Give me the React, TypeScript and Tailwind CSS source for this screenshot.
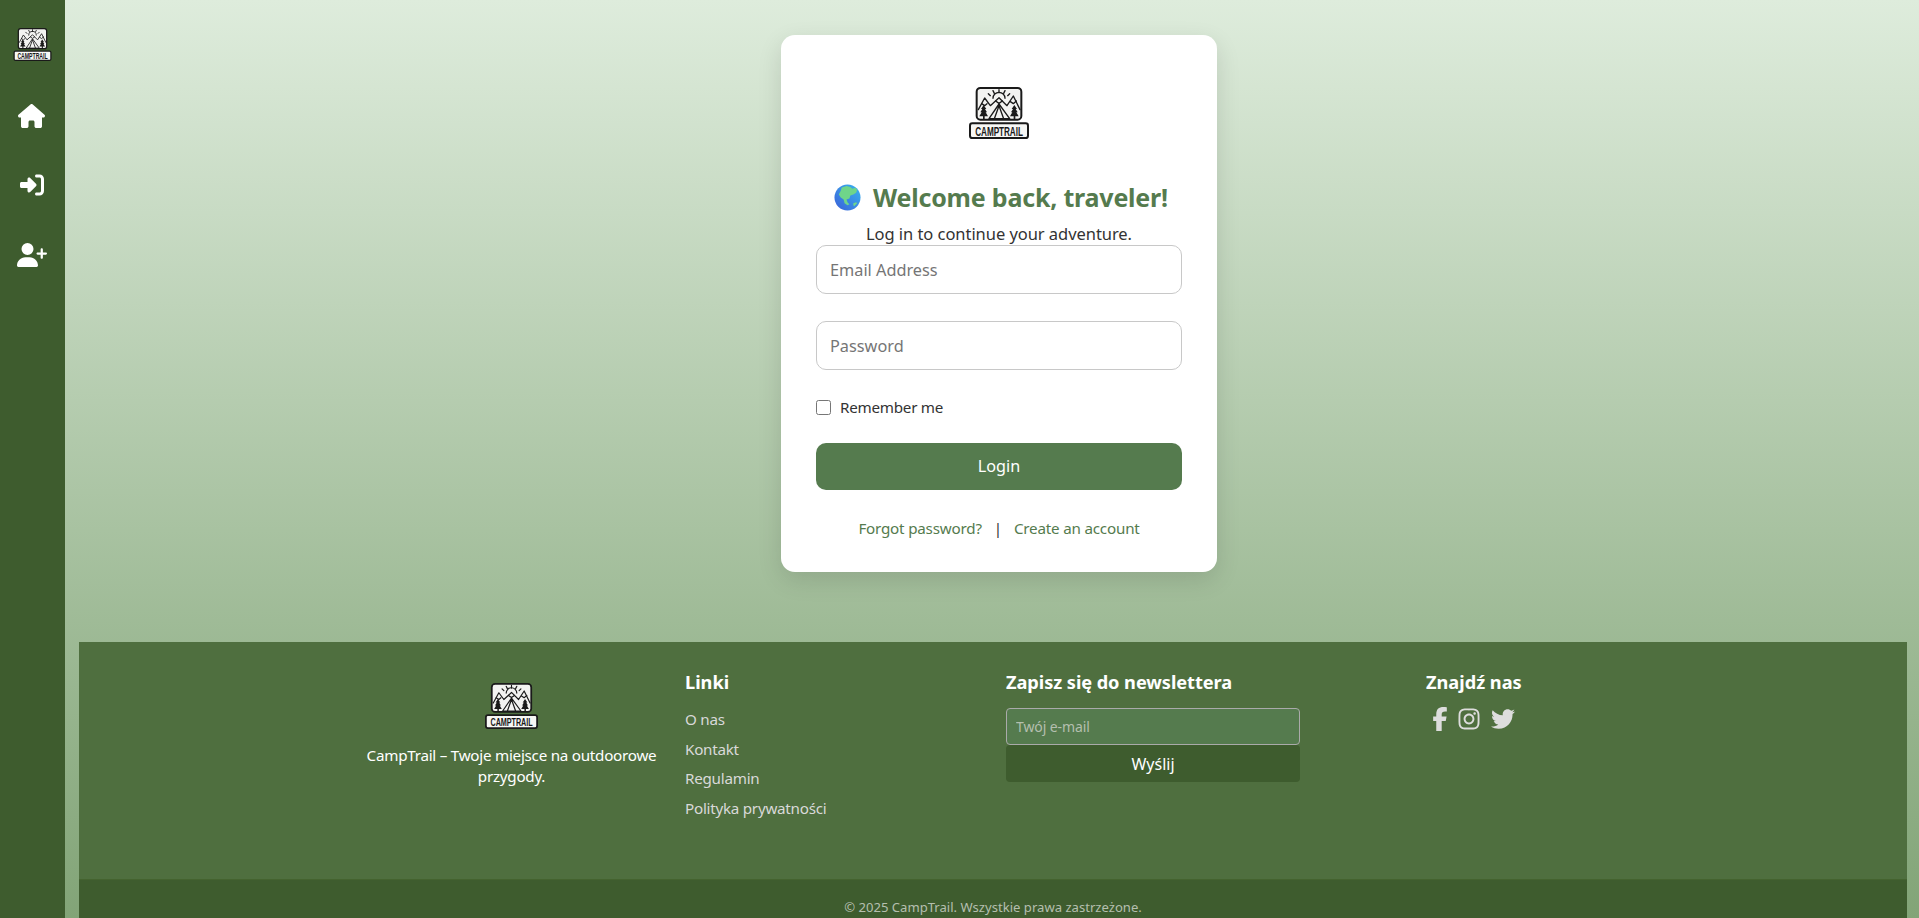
import React from "react";
import { FaHouse, FaRightToBracket, FaUserPlus, FaFacebookF, FaInstagram, FaTwitter } from "react-icons/fa6";

function Logo({ className }: { className: string }) {
  return (
    <svg viewBox="0 0 180 156" className={className}>
      <rect x="23" y="3" width="134" height="95" rx="11" fill="#f3f3f1" stroke="#1a1a1a" strokeWidth="6" />
      <g stroke="#1a1a1a" strokeWidth="4" fill="none" strokeLinecap="round" strokeLinejoin="round">
        <path d="M72 34a18 18 0 0 1 36 0" />
        <path d="M90 8v9M72 11l4 8M108 11l-4 8M58 20l6 6M122 20l-6 6" />
        <path d="M28 68L47 33l17 23 26-24 24 24 19-29 20 41" />
        <path d="M38 50l9 6 7-6M80 42l10 7 10-7M124 44l9 6 9-8" />
        <path d="M60 95l30-44 32 44M90 56L76 95M90 56l14 39M62 95h58" />
      </g>
      <g fill="#1a1a1a">
        <path d="M44 54l8 12h-4l6 10h-4l7 12H47v8h-5v-8H31l7-12h-4l6-10h-4z" />
        <path d="M136 54l8 12h-4l6 10h-4l7 12h-10v8h-5v-8h-11l7-12h-4l6-10h-4z" />
      </g>
      <rect x="3" y="109" width="174" height="44" rx="7" fill="#f7f7f5" stroke="#1a1a1a" strokeWidth="6" />
      <text x="143" y="146" transform="scale(0.63 1)" textAnchor="middle" fontSize="39" fontWeight="700" fill="#1a1a1a" style={{ fontFamily: '"Liberation Sans", sans-serif' }}>CAMPTRAIL</text>
    </svg>
  );
}

function Globe() {
  return (
    <svg viewBox="0 0 28 28" className="w-[27px] h-[27px] shrink-0">
      <defs>
        <linearGradient id="sea" x1="0" y1="1" x2="1" y2="0">
          <stop offset="0" stopColor="#3b5fd8" />
          <stop offset="1" stopColor="#38b6f0" />
        </linearGradient>
      </defs>
      <circle cx="14" cy="14" r="13.500" fill="url(#sea)" />
      <path d="M8 3.500l5-1.500 4 1 2 2 3-1 2 2-1 3-3 2-3 1-1 3-3 1 1 3 2 2-2 1-3-2-1-4-3-2-2-3 2-4z" fill="#6fd58a" />
      <path d="M20 20l3-1 1 1-3 3-1-1z" fill="#6fd58a" />
    </svg>
  );
}

const links = ["O nas", "Kontakt", "Regulamin", "Polityka prywatności"];

export default function App() {
  return (
    <div className="flex h-[918px] overflow-hidden text-[15.200px] tracking-[-0.25px] text-[#333]" style={{ fontFamily: '"Noto Sans", "Open Sans", sans-serif' }}>
      <aside className="w-[65px] shrink-0 bg-[#3e5c2e] flex flex-col items-center text-white pt-[28px]">
        <Logo className="w-[39px] h-[33px]" />
        <FaHouse className="h-[24px] w-[27px] mt-[43px] mr-[2px]" />
        <FaRightToBracket className="h-[24px] w-[24px] mt-[45px] mr-[2px]" />
        <FaUserPlus className="h-[24px] w-[30px] mt-[46px] mr-[2px]" />
      </aside>
      <main className="flex-1 flex flex-col bg-gradient-to-b from-[#deecdc] to-[#82a477] pl-[14px] pr-[12px]">
        <div className="h-[642px] shrink-0 flex justify-center items-start pt-[35px] pl-[12px]">
          <div className="w-[436px] h-[537px] bg-white rounded-[14px] shadow-[0_8px_24px_rgba(0,0,0,0.12)] px-[35px] pt-[52px] flex flex-col">
            <Logo className="w-[60px] h-[52px] mx-auto" />
            <h1 className="mt-[41px] pl-[4px] flex items-center justify-center gap-[12px] text-[25px] tracking-[-0.2px] leading-[34px] font-bold text-[#557b4e]">
              <Globe />
              <span>Welcome back, traveler!</span>
            </h1>
            <p className="text-center text-[16.500px] tracking-[-0.05px] leading-[24px] mt-[8px] h-[23px]">Log in to continue your adventure.</p>
            <input placeholder="Email Address" className="w-full h-[49px] px-[13px] border border-[#c8c8c8] rounded-[10px] text-[16.300px] tracking-normal outline-none placeholder:text-[#757575]" />
            <input placeholder="Password" className="w-full h-[49px] px-[13px] border border-[#c8c8c8] rounded-[10px] text-[16.300px] tracking-normal mt-[27px] outline-none placeholder:text-[#757575]" />
            <label className="flex items-center mt-[27px] h-[20px]">
              <input type="checkbox" className="w-[15px] h-[15px] m-0 mr-[9px] appearance-auto" />
              Remember me
            </label>
            <button className="w-full h-[47px] mt-[26px] rounded-[10px] bg-[#557b4e] text-white text-[16.200px] tracking-normal">Login</button>
            <div className="mt-[27px] flex justify-center items-center tracking-[-0.2px] text-[#557b4e]">
              <span>Forgot password?</span>
              <span className="mx-[12px] text-[#333]">|</span>
              <span>Create an account</span>
            </div>
          </div>
        </div>
        <footer className="flex-1 flex flex-col bg-[#4f6f3f] text-white">
          <div className="h-[237px] shrink-0 pl-[286px] pt-[28px] grid grid-cols-[320px_321px_420px_auto]">
            <div className="w-[293px] flex flex-col items-center text-center pt-[13px]">
              <Logo className="w-[53px] h-[46px]" />
              <p className="mt-[16px] w-[310px] shrink-0 leading-[21px]">CampTrail – Twoje miejsce na outdoorowe przygody.</p>
            </div>
            <div>
              <h4 className="text-[18.200px] tracking-normal leading-[24px] font-bold">Linki</h4>
              <ul className="mt-[15px] text-[#d9d9d9] leading-[21px] flex flex-col gap-[8.600px]">
                {links.map((l) => (
                  <li key={l}>{l}</li>
                ))}
              </ul>
            </div>
            <div className="w-[294px]">
              <h4 className="text-[18.200px] tracking-[-0.05px] leading-[24px] font-bold">Zapisz się do newslettera</h4>
              <input placeholder="Twój e-mail" className="block w-full h-[37px] mt-[14px] px-[9px] bg-[#557b4e] border border-[#aaa] rounded-[4px] text-[14px] tracking-[-0.1px] outline-none placeholder:text-[#b4bfae]" />
              <button className="block w-full h-[37px] bg-[#3e5c2e] rounded-[4px] text-white text-[16px] tracking-normal">Wyślij</button>
            </div>
            <div>
              <h4 className="text-[18.200px] tracking-normal leading-[24px] font-bold">Znajdź nas</h4>
              <div className="mt-[13px] ml-[2px] flex items-center text-[#dddddd] text-[24px]">
                <FaFacebookF className="mr-[5px]" />
                <FaInstagram className="mr-[10px]" />
                <FaTwitter />
              </div>
            </div>
          </div>
          <div className="flex-1 bg-[#3e5c2e] border-t border-[#44632f] text-center text-[13.100px] tracking-normal text-[#b5bfae] pt-[18px]">© 2025 CampTrail. Wszystkie prawa zastrzeżone.</div>
        </footer>
      </main>
    </div>
  );
}
